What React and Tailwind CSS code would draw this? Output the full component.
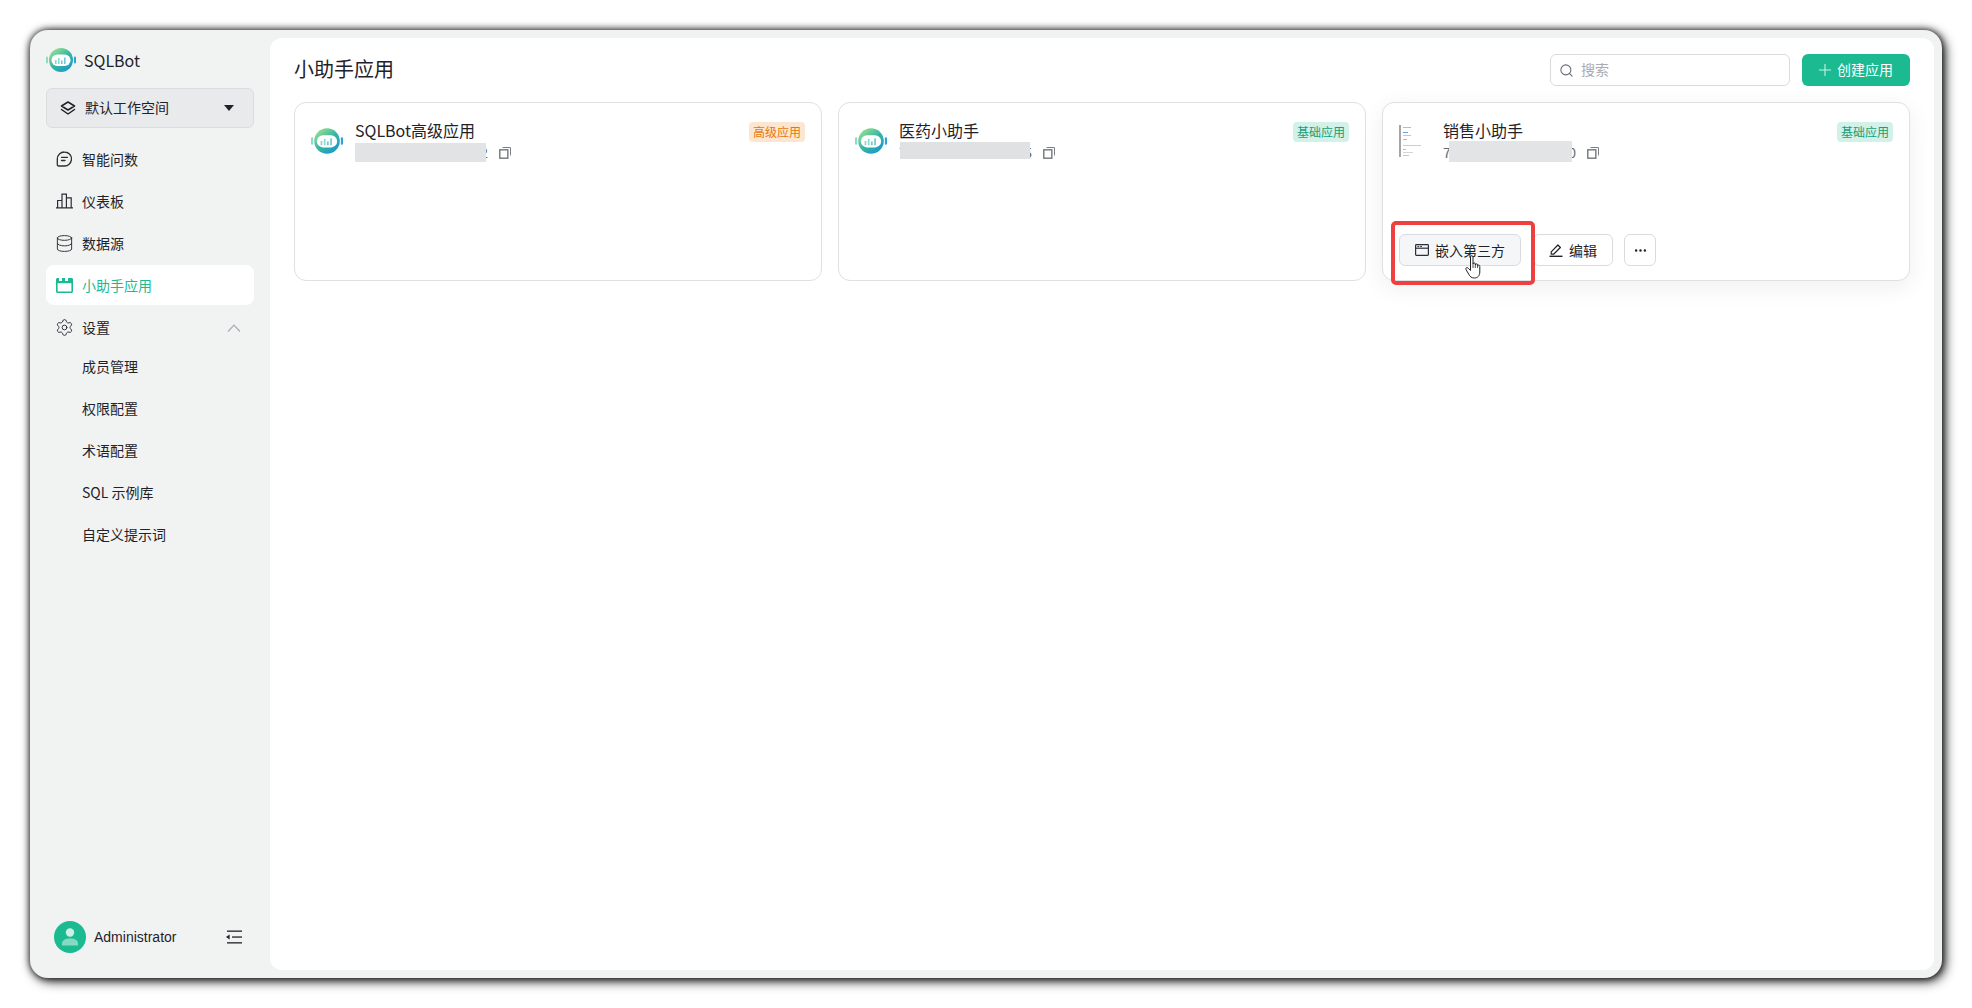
import React from 'react';
import { Database, Search, Settings, Ellipsis } from 'lucide-react';

const CJK = "font-['Microsoft_YaHei','Noto_Sans_CJK_SC',sans-serif]";

function LogoIcon({ className, id }) {
  return (
    <svg viewBox="0 0 30 24" className={className}>
      <defs>
        <linearGradient id={id} x1="0.1" y1="0" x2="0.9" y2="1">
          <stop offset="0" stopColor="#a8e48e" />
          <stop offset="0.5" stopColor="#35b7a4" />
          <stop offset="1" stopColor="#1793d1" />
        </linearGradient>
      </defs>
      <rect x="0" y="8.500" width="2" height="7" rx="1" fill="#8adcc4" />
      <rect x="28" y="8.500" width="2" height="7" rx="1" fill="#2aa4cf" />
      <circle cx="15" cy="12" r="12" fill={`url(#${id})`} />
      <rect x="5.500" y="6.500" width="19" height="11.500" rx="5.700" fill="#fff" />
      <rect x="9" y="12" width="1.600" height="4" fill="#8ad9d0" />
      <rect x="12" y="10" width="1.600" height="6" fill="#8ad9d0" />
      <rect x="15" y="12.500" width="1.600" height="3.500" fill="#6fc9d8" />
      <rect x="18" y="9.500" width="1.600" height="6.500" fill="#6fc9d8" />
    </svg>
  );
}

function ChatIcon() {
  return (
    <svg viewBox="0 0 16 16" className="w-4 h-4 shrink-0" fill="none" stroke="#2b2f36" strokeWidth="1.300">
      <path d="M8.500 1a7 7 0 1 1 0 14H2.500a1.200 1.200 0 0 1-1.200-1.200V8a7 7 0 0 1 7.200-7Z" strokeLinejoin="round" />
      <path d="M5.500 6.300h6M5.500 9.500h3.500" strokeLinecap="round" />
    </svg>
  );
}

function ChartIcon() {
  return (
    <svg viewBox="0 0 17 16" className="w-[17px] h-4 shrink-0" fill="none" stroke="#2b2f36" strokeWidth="1.200">
      <path d="M0 14.800h17M1.600 14.800V7.500h4.400v7.300M6 14.800V1.200h4.400v13.600M10.400 4.800h4.800v10" />
    </svg>
  );
}

function LayersIcon() {
  return (
    <svg viewBox="0 0 16 15" className="w-4 h-[15px] mr-[9px] shrink-0" fill="none" stroke="#1f2329" strokeWidth="1.500" strokeLinejoin="round">
      <path d="M8 1 14.500 5 8 9 1.500 5Z" />
      <path d="M1.500 8.500 8 13l6.500-4.500" strokeLinecap="round" />
    </svg>
  );
}

function ActiveWindowIcon() {
  return (
    <svg viewBox="0 0 17 15" className="w-[17px] h-[15px] shrink-0">
      <rect x="0.800" y="0.800" width="15.400" height="13.400" rx="0.600" fill="none" stroke="#1cba90" strokeWidth="1.600" />
      <rect x="0.800" y="0.800" width="15.400" height="4.400" fill="#1cba90" />
      <rect x="3" y="0" width="3" height="3" fill="#f9fdfc" />
      <rect x="9" y="0" width="3" height="3" fill="#f9fdfc" />
    </svg>
  );
}

function WindowIcon() {
  return (
    <svg viewBox="0 0 14 12" className="w-[14px] h-3 mr-[6px] shrink-0" fill="none" stroke="#2b2f36" strokeWidth="1.200">
      <rect x="0.600" y="0.600" width="12.800" height="10.800" rx="0.800" />
      <path d="M.6 4.200h12.800" />
      <path d="M2.400 2.400h1.800M5.200 2.400h1.800" strokeWidth="1" />
    </svg>
  );
}

function PencilIcon() {
  return (
    <svg viewBox="0 0 14 14" className="w-[14px] h-[14px] mr-[6px] shrink-0" fill="none" stroke="#1f2329" strokeWidth="1.200" strokeLinejoin="round">
      <path d="M2.200 8.800 8.900 2l2.500 2.500-6.800 6.700H2.200Z" />
      <path d="M.5 13.300h13" strokeWidth="1.400" />
    </svg>
  );
}

function CollapseIcon() {
  return (
    <svg viewBox="0 0 16 14" className="w-4 h-[14px] shrink-0" fill="#1f2329">
      <rect x="1" y="0.500" width="15" height="1.300" />
      <rect x="6" y="6.400" width="10" height="1.300" />
      <rect x="1" y="12.200" width="15" height="1.300" />
      <path d="M0 7 3.600 4.600v4.800Z" />
    </svg>
  );
}

function CopyIcon() {
  return (
    <svg viewBox="0 0 12 12" className="w-3 h-3 ml-[11px] mt-[2px] shrink-0" fill="none" stroke="#7c7f85">
      <rect x="0.800" y="2.800" width="8" height="8.400" strokeWidth="1.500" />
      <path d="M3.500 .5h8v8" strokeWidth="1" />
    </svg>
  );
}

function AvatarIcon() {
  return (
    <div className="w-8 h-8 rounded-full bg-[#1cba90] flex items-center justify-center shrink-0">
      <svg viewBox="0 0 32 32" className="w-8 h-8">
        <circle cx="16" cy="11.500" r="4.200" fill="#cdf0e6" />
        <path d="M8 24.500v-1.700c0-3.400 3-5.300 8-5.300s8 1.900 8 5.300v1.700Z" fill="#86dac3" />
      </svg>
    </div>
  );
}

function NavItem({ icon, label, active }) {
  return (
    <div className={`h-10 flex items-center pl-[10px] rounded-lg text-sm ${active ? 'bg-white text-[#1cba90]' : 'text-[#1f2329]'}`}>
      <span className="w-4 h-4 mr-[10px] flex items-center justify-center">{icon}</span>
      <span className="-mt-px">{label}</span>
    </div>
  );
}

function SubItem({ label, first }) {
  return (
    <div className={`h-10 flex items-center pl-9 text-sm text-[#1f2329] ${first ? '-mt-[2px]' : ''}`}>
      <span className="-mt-[2px]">{label}</span>
    </div>
  );
}

// tiny preview of a page, nothing in it is readable
function Thumb() {
  const rows = [
    [8, 4, '#b9bbbf'],
    [5, 2, '#6f9be0'],
    [8, 3, '#c4c6c9'],
    [4, 5, '#b9bbbf'],
    [18, 3, '#cdced1'],
    [3, 2, '#b9bbbf'],
    [10, 2, '#d4d5d8'],
    [6, 0, '#c4c6c9'],
  ];
  return (
    <div className="w-8 h-8 -mt-[3px] flex flex-col border-l-2 border-[#a3a5a9] pl-[2px] pt-[2px]">
      {rows.map(([w, mb, c], i) => (
        <div key={i} className="h-px shrink-0" style={{ width: w, marginBottom: mb, backgroundColor: c }} />
      ))}
    </div>
  );
}

function AppCard({ icon, title, idHead, idTail, mask, badge, badgeClass, hovered }) {
  return (
    <div className={`relative h-[179px] rounded-xl border border-[#dee0e3] bg-white px-4 pt-4 ${hovered ? 'shadow-[0_6px_24px_rgba(31,35,41,0.07)]' : ''}`}>
      <div className="flex items-start">
        <div className="w-8 h-8 mt-[9px] mr-3 shrink-0">{icon}</div>
        <div className="flex-1 min-w-0">
          <div className="flex items-start justify-between">
            <div className="text-base leading-[22px] text-[#1f2329]">{title}</div>
            <div className={`h-5 px-1 mt-[3px] rounded text-xs leading-5 ${badgeClass}`}>{badge}</div>
          </div>
          <div className="flex items-center h-[22px] -mt-px text-sm text-[#646a73]">
            <div className="relative w-[133px] flex justify-between">
              <span>{idHead}</span>
              <span>{idTail}</span>
              {/* blurred-out part of the id */}
              <div className={`absolute ${mask}`} />
            </div>
            <CopyIcon />
          </div>
        </div>
      </div>
      {hovered && (
        <div className="absolute left-4 bottom-[14px] flex items-center">
          <button className="h-8 w-[122px] flex items-center justify-center rounded-md border border-[#d9dcdf] bg-[#f5f6f7] text-sm text-[#1f2329]">
            <WindowIcon /><span className="-mt-px">嵌入第三方</span>
          </button>
          <button className="ml-3 h-8 w-[80px] flex items-center justify-center rounded-md border border-[#d9dcdf] bg-white text-sm text-[#1f2329]">
            <PencilIcon /><span className="-mt-px">编辑</span>
          </button>
          <button className="ml-[11px] h-8 w-8 flex items-center justify-center rounded-md border border-[#d9dcdf] bg-white text-[#1f2329]">
            <Ellipsis size={15} />
          </button>
        </div>
      )}
    </div>
  );
}

export default function App() {
  return (
    <div className={`w-[1972px] h-[1008px] bg-white p-[30px] overflow-hidden ${CJK}`}>
      <div className="h-full flex bg-[#f1f3f3] rounded-[18px] shadow-[3px_3px_12px_rgba(0,0,0,0.85),0_0_7px_rgba(0,0,0,0.85)]">
        {/* Sidebar */}
        <aside className="w-[240px] shrink-0 flex flex-col px-4 pt-[18px] pb-[25px]">
          <div className="flex items-center h-6 mb-[16px]">
            <LogoIcon id="logo-side" className="w-[30px] h-6 mr-2" />
            <span className="text-base text-[#1f2329]">SQLBot</span>
          </div>
          <div className="h-10 flex items-center rounded-md border border-[#dadcdf] bg-[#e8eaeb] pl-[13px] pr-[19px] text-sm text-[#1f2329]">
            <LayersIcon />
            <span className="flex-1 -mt-[2px]">默认工作空间</span>
            <span className="w-0 h-0 border-x-[5px] border-x-transparent border-t-[6px] border-t-[#1f2329]" />
          </div>
          <nav className="mt-[11px] flex flex-col gap-[2px]">
            <NavItem icon={<ChatIcon />} label="智能问数" />
            <NavItem icon={<ChartIcon />} label="仪表板" />
            <NavItem icon={<Database size={19} strokeWidth={1.200} className="shrink-0 text-[#2b2f36]" />} label="数据源" />
            <NavItem icon={<ActiveWindowIcon />} label="小助手应用" active />
            <div className="relative">
              <NavItem icon={<Settings size={19} strokeWidth={1.200} className="shrink-0 text-[#2b2f36]" />} label="设置" />
              <svg viewBox="0 0 14 8" className="absolute right-[13px] top-[17px] w-[14px] h-2" fill="none" stroke="#a8abb2" strokeWidth="1.200">
                <path d="M1 7.500 7 1.200l6 6.300" />
              </svg>
            </div>
            <SubItem label="成员管理" first />
            <SubItem label="权限配置" />
            <SubItem label="术语配置" />
            <SubItem label="SQL 示例库" />
            <SubItem label="自定义提示词" />
          </nav>
          <div className="mt-auto flex items-center pl-2 pr-3">
            <AvatarIcon />
            <span className="ml-2 flex-1 text-sm font-['Liberation_Sans',sans-serif] text-[#1f2329]">Administrator</span>
            <CollapseIcon />
          </div>
        </aside>

        {/* Main */}
        <main className="flex-1 bg-white rounded-xl my-2 mr-2 px-6 pt-4">
          <header className="h-8 flex items-center">
            <h1 className="flex-1 text-xl text-[#1f2329] -mt-[2px]">小助手应用</h1>
            <div className="w-[240px] h-8 flex items-center rounded-md border border-[#d9dcdf] pl-2 text-sm text-[#a8abb2]">
              <Search size={15} strokeWidth={1.700} className="text-[#646a73] mr-[7px]" />
              <span className="-mt-[2px]">搜索</span>
            </div>
            <button className="ml-3 w-[108px] h-8 flex items-center justify-center rounded-md bg-[#1cba90] text-sm text-white">
              <svg viewBox="0 0 12 12" className="w-3 h-3 mr-[6px]" stroke="#c9f0e5" strokeWidth="1.100">
                <path d="M6 0v12M0 6h12" />
              </svg>
              <span className="-mt-[2px]">创建应用</span>
            </button>
          </header>
          <div className="grid grid-cols-3 gap-4 mt-4">
            <AppCard
              icon={<LogoIcon id="logo-a" className="w-8 h-[26px]" />}
              title="SQLBot高级应用"
              idHead="7"
              idTail="2"
              mask="left-0 top-[1px] w-[131px] h-[19px] bg-[#e2e3e5]"
              badge="高级应用"
              badgeClass="bg-[#fde6cf] text-[#e8760c]"
            />
            <AppCard
              icon={<LogoIcon id="logo-b" className="w-8 h-[26px]" />}
              title="医药小助手"
              idHead="7"
              idTail="5"
              mask="left-[1px] top-0 w-[130px] h-[17px] bg-[#e0e1e3]"
              badge="基础应用"
              badgeClass="bg-[#d2f1e9] text-[#189e7a]"
            />
            <AppCard
              icon={<Thumb />}
              title="销售小助手"
              idHead="7"
              idTail="0"
              mask="left-[6px] -top-px w-[123px] h-[21px] bg-[#e3e4e6]"
              badge="基础应用"
              badgeClass="bg-[#d2f1e9] text-[#189e7a]"
              hovered
            />
          </div>
        </main>
      </div>

      {/* annotation drawn over the screenshot */}
      <div className="absolute left-[1391px] top-[221px] w-[144px] h-[64px] border-4 border-[#ef4040] rounded-[5px]" />
      <svg viewBox="0 0 18 24" className="absolute left-[1465px] top-[255px] w-[18px] h-6" fill="#fff" stroke="#222" strokeWidth="1" strokeLinejoin="round">
        <path d="M5.500 2c0-1.800 2.500-1.800 2.500 0v7c0-1.500 2.300-1.500 2.300 0v1c0-1.500 2.300-1.500 2.300 0v1c0-1.300 2.200-1.300 2.200 .3V17c0 3.500-2 6-5.300 6-3 0-4.500-1.400-5.800-3.800L1 14.500c-.8-1.500 1-2.700 2.200-1.300l2.300 2.300Z" />
        <path d="M8 9v4M10.300 10v3M12.600 11v2" fill="none" strokeWidth="0.800" />
      </svg>
    </div>
  );
}
